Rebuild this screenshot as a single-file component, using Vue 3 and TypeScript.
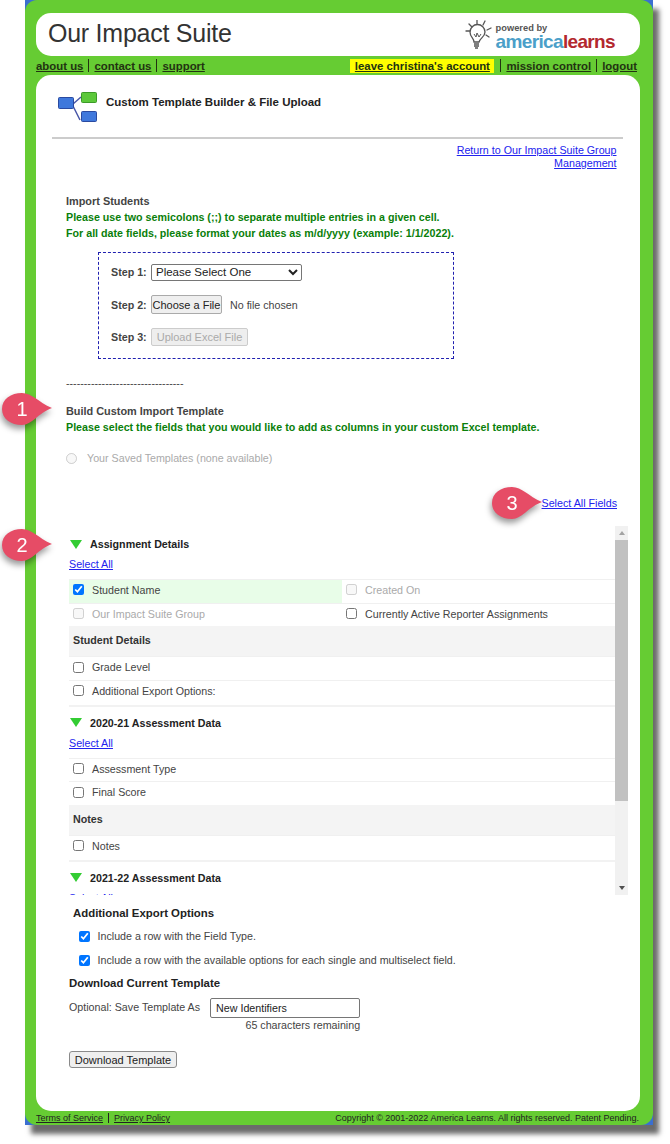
<script setup lang="ts">
interface Field {
  label: string;
  checked?: boolean;
  disabled?: boolean;
}

interface Group {
  heading?: string;
  rows: Field[][];
}

interface Section {
  title: string;
  groups: Group[];
}

const topLinks = ['about us', 'contact us', 'support'];

const sections: Section[] = [
  {
    title: 'Assignment Details',
    groups: [
      {
        rows: [
          [{ label: 'Student Name', checked: true }, { label: 'Created On', disabled: true }],
          [{ label: 'Our Impact Suite Group', disabled: true }, { label: 'Currently Active Reporter Assignments' }],
        ],
      },
      { heading: 'Student Details', rows: [[{ label: 'Grade Level' }], [{ label: 'Additional Export Options:' }]] },
    ],
  },
  {
    title: '2020-21 Assessment Data',
    groups: [
      { rows: [[{ label: 'Assessment Type' }], [{ label: 'Final Score' }]] },
      { heading: 'Notes', rows: [[{ label: 'Notes' }]] },
    ],
  },
  { title: '2021-22 Assessment Data', groups: [] },
];

const exportOptions = [
  'Include a row with the Field Type.',
  'Include a row with the available options for each single and multiselect field.',
];

const callouts = [
  { n: 1, cls: 'one' },
  { n: 2, cls: 'two' },
  { n: 3, cls: 'three' },
];
</script>

<template>
  <div class="page">
    <div class="frame">
      <div class="shell">
        <header class="banner">
          <span class="suite-name">Our Impact Suite</span>
          <div class="logo">
            <svg class="bulb" width="27" height="29" viewBox="0 0 27 29" fill="none" stroke="#555" stroke-width="1.3">
              <path d="M1 11h4M4 4l3 3M12 0v4M20 1l-2 4M26 8l-4 2M24 17l-3-2" stroke-linecap="round" />
              <path d="M9 22c0-4-4-5-4-10a7.500 7.500 0 0 1 15 0c0 5-5 6-6 10z" />
              <path d="M9 14l2 3 1-4 2 4 2-3" stroke-width="1" />
              <path d="M9 24h5M9 26h5M10 28h3" stroke-width="1.700" />
            </svg>
            <div class="logo-text">
              <span class="powered">powered by</span>
              <span class="brand"><b class="america">america</b><b class="learns">learns</b></span>
            </div>
          </div>
        </header>

        <nav class="top-nav">
          <div class="nav-side">
            <template v-for="(link, i) in topLinks" :key="link">
              <span v-if="i" class="pipe"></span>
              <a class="nav-link">{{ link }}</a>
            </template>
          </div>
          <div class="nav-side">
            <span class="highlight"><a class="nav-link">leave christina's account</a></span>
            <span class="pipe"></span>
            <a class="nav-link">mission control</a>
            <span class="pipe"></span>
            <a class="nav-link">logout</a>
          </div>
        </nav>

        <main class="panel">
          <div class="page-title">
            <svg width="39" height="31" viewBox="0 0 39 31" fill="none">
              <path d="M15 12l8-7M15 14l7 14" stroke="#4a58a8" stroke-width="1.500" />
              <rect x="0.500" y="5.500" width="15" height="11" rx="1" fill="#3f78dc" stroke="#2a4aa0" />
              <rect x="23.500" y="0.500" width="15" height="10" rx="1" fill="#5cc83a" stroke="#3c9a28" />
              <rect x="23.500" y="19.500" width="15" height="10" rx="1" fill="#3f78dc" stroke="#2a4aa0" />
            </svg>
            <h1>Custom Template Builder &amp; File Upload</h1>
          </div>
          <hr class="rule" />
          <div class="return-row"><a class="link">Return to Our Impact Suite Group Management</a></div>

          <section class="import">
            <h2>Import Students</h2>
            <p class="note">Please use two semicolons (;;) to separate multiple entries in a given cell.</p>
            <p class="note">For all date fields, please format your dates as m/d/yyyy (example: 1/1/2022).</p>
            <div class="steps">
              <div class="step">
                <label>Step 1:</label>
                <select class="step-select"><option>Please Select One</option></select>
              </div>
              <div class="step">
                <label>Step 2:</label>
                <button class="file-btn" type="button">Choose a File</button>
                <span class="no-file">No file chosen</span>
              </div>
              <div class="step">
                <label>Step 3:</label>
                <button class="upload-btn" type="button" disabled>Upload Excel File</button>
              </div>
            </div>
            <div class="dashes">---------------------------------</div>
          </section>

          <section class="build">
            <h2>Build Custom Import Template</h2>
            <p class="note">Please select the fields that you would like to add as columns in your custom Excel template.</p>
            <label class="saved"><input type="radio" disabled /><span>Your Saved Templates (none available)</span></label>
          </section>

          <div class="select-fields"><a class="link">Select All Fields</a></div>

          <div class="picker">
            <div class="picker-list">
              <div v-for="section in sections" :key="section.title" class="picker-section">
                <div class="section-head">
                  <span class="arrow"></span>
                  <strong>{{ section.title }}</strong>
                </div>
                <a class="link select-all">Select All</a>
                <div v-for="(group, g) in section.groups" :key="g">
                  <div v-if="group.heading" class="group-head">{{ group.heading }}</div>
                  <div v-for="(row, r) in group.rows" :key="r" class="field-row">
                    <label
                      v-for="field in row"
                      :key="field.label"
                      class="field"
                      :class="{ picked: field.checked, off: field.disabled }"
                    >
                      <input type="checkbox" :checked="field.checked" :disabled="field.disabled" />
                      <span>{{ field.label }}</span>
                    </label>
                  </div>
                </div>
              </div>
            </div>
            <div class="scrollbar">
              <span class="scroll-btn up"></span>
              <span class="thumb"></span>
              <span class="scroll-rest"></span>
              <span class="scroll-btn down"></span>
            </div>
          </div>

          <section class="export">
            <h3>Additional Export Options</h3>
            <label v-for="option in exportOptions" :key="option" class="export-option">
              <input type="checkbox" checked />
              <span>{{ option }}</span>
            </label>
          </section>

          <section class="download">
            <h3>Download Current Template</h3>
            <div class="save-row">
              <span class="save-label">Optional: Save Template As</span>
              <div class="save-field">
                <input class="save-input" type="text" value="New Identifiers" />
                <span class="remaining">65 characters remaining</span>
              </div>
            </div>
            <button class="download-btn" type="button">Download Template</button>
          </section>
        </main>

        <footer class="foot">
          <div class="foot-links">
            <a>Terms of Service</a>
            <span class="foot-pipe"></span>
            <a>Privacy Policy</a>
          </div>
          <span>Copyright © 2001-2022 America Learns. All rights reserved. Patent Pending.</span>
        </footer>
      </div>

      <div v-for="c in callouts" :key="c.n" class="callout" :class="c.cls">
        <svg width="52" height="34" viewBox="0 0 52 34">
          <path d="M21 1C31 1 37 10 51 16C37 21 31 33 21 33C10 33 1 27 1 17S10 1 21 1z" fill="#e64c66" />
        </svg>
        <span>{{ c.n }}</span>
      </div>
    </div>
  </div>
</template>

<style scoped>
.page {
  height: 1144px;
}

.frame {
  position: relative;
  width: 628px;
  height: 1125px;
  margin-left: 25px;
  background: #3b6fd0;
  box-shadow: 6px 9px 5px #6b6b6b;
  font-family: 'Liberation Sans', Arial, sans-serif;
  font-size: 10.700px;
  color: #444;
}

.shell {
  display: flex;
  flex-direction: column;
  height: 100%;
  padding: 13px 13px 0 11px;
  box-sizing: border-box;
  background: #66cc33;
  border-radius: 12px;
}

.banner {
  display: flex;
  justify-content: space-between;
  height: 43px;
  padding: 0 25px 0 12px;
  background: #fff;
  border-radius: 15px;
}

.suite-name {
  font-size: 25px;
  line-height: 41px;
  letter-spacing: -0.25px;
  color: #333;
}

.logo {
  display: flex;
  gap: 4px;
  padding-top: 7px;
}

.logo-text {
  display: flex;
  flex-direction: column;
}

.powered {
  font-size: 9.300px;
  font-weight: bold;
  line-height: 10px;
  margin-top: 3px;
  color: #555;
}

.brand {
  font-size: 19px;
  line-height: 18px;
  letter-spacing: -0.65px;
}

.america {
  color: #4b9fc9;
}

.learns {
  color: #b3282e;
}

.top-nav {
  display: flex;
  justify-content: space-between;
  height: 19px;
  padding-right: 3px;
  align-items: center;
}

.nav-side {
  display: flex;
  align-items: center;
}

.nav-link {
  font-size: 11.400px;
  font-weight: bold;
  color: #223311;
  text-decoration: underline;
}

.pipe {
  width: 1px;
  height: 13px;
  margin: 0 5px;
  background: #223311;
}

.highlight {
  display: flex;
  align-items: center;
  height: 14px;
  margin-right: 1px;
  padding: 0 4.500px;
  background: #ffff00;
}

.panel {
  flex: 1;
  padding: 17px 0 0;
  background: #fff;
  border-radius: 15px;
}

.page-title {
  display: flex;
  gap: 9px;
  padding-left: 22px;
  height: 32px;
}

.page-title h1 {
  margin: 3px 0 0;
  font-size: 11.500px;
  line-height: 14px;
  color: #222;
}

.rule {
  height: 2px;
  margin: 13px 17px 0 16px;
  border: 0;
  background: #ccc;
}

.link {
  color: #2222ee;
  text-decoration: underline;
}

.return-row {
  width: 165px;
  margin: 5px 0 0 415.500px;
  line-height: 13px;
  text-align: right;
}

.import,
.build {
  padding-left: 30px;
}

.import {
  margin-top: 23px;
}

h2 {
  margin: 0;
  font-size: 10.900px;
  line-height: 16px;
  color: #444;
}

.note {
  margin: 0;
  font-size: 10.700px;
  font-weight: bold;
  line-height: 16px;
  color: #0a800a;
}

.steps {
  box-sizing: border-box;
  width: 356px;
  height: 107px;
  margin: 11px 0 0 32px;
  padding: 9px 12px;
  border: 1px dashed #2020b0;
}

.step {
  display: flex;
  align-items: center;
  gap: 5px;
  height: 20px;
  margin-bottom: 12.500px;
}

.step label {
  width: 35px;
  font-weight: bold;
  white-space: nowrap;
}

.step-select {
  width: 151px;
  height: 17px;
  padding: 0;
  font-family: inherit;
  font-size: 11.500px;
  color: #222;
  background: #fff;
  border: 1px solid #767676;
  border-radius: 2px;
}

.file-btn,
.upload-btn {
  padding: 0;
  font-family: inherit;
  font-size: 11px;
  border: 1px solid #aaa;
  border-radius: 2px;
  white-space: nowrap;
}

.file-btn {
  width: 71px;
  height: 19px;
  color: #222;
  background: #efefef;
}

.upload-btn {
  width: 97px;
  height: 18px;
  color: #aaa;
  background: #eee;
  border-color: #ccc;
}

.no-file {
  margin-left: 3px;
}

.dashes {
  margin-top: 17px;
  line-height: 14px;
  color: #444;
}

.build {
  margin-top: 13px;
}

.saved {
  display: flex;
  align-items: center;
  gap: 10px;
  margin-top: 17px;
  color: #aaa;
}

.saved input {
  width: 11px;
  height: 11px;
  margin: 0;
}

.select-fields {
  margin: 32px 23px 0 0;
  line-height: 14px;
  text-align: right;
}

.picker {
  display: flex;
  width: 559px;
  height: 369px;
  margin: 16px 0 0 33px;
  overflow: hidden;
}

.picker-list {
  flex: 1;
  min-width: 0;
  padding-top: 2px;
  overflow: hidden;
}

.picker-section {
  padding-bottom: 1px;
  border-bottom: 2px solid #f2f2f2;
}

.picker-section:last-child {
  border-bottom: 0;
}

.section-head {
  display: flex;
  align-items: center;
  gap: 8px;
  height: 18px;
  margin-top: 7px;
  padding-left: 1px;
}

.section-head strong {
  color: #222;
}

.arrow {
  width: 0;
  height: 0;
  border-left: 6px solid transparent;
  border-right: 6px solid transparent;
  border-top: 9px solid #33cc33;
}

.select-all {
  display: block;
  margin: 4px 0 8px;
  line-height: 14px;
}

.group-head {
  height: 30px;
  padding-left: 4px;
  font-weight: bold;
  line-height: 29px;
  color: #333;
  background: #f4f4f4;
}

.field-row {
  display: flex;
  height: 22.700px;
  border-top: 1px solid #f0f0f0;
}

.field {
  display: flex;
  align-items: center;
  gap: 8px;
  box-sizing: border-box;
  width: 274px;
  padding: 0 0 3px 4px;
  color: #444;
}

.field.picked {
  background: #e8fde8;
}

.field.off {
  color: #aaa;
}

.field input {
  width: 11px;
  height: 11px;
  margin: 0;
}

.scrollbar {
  display: flex;
  flex-direction: column;
  width: 13px;
  background: #f1f1f1;
}

.scroll-btn {
  position: relative;
  height: 14px;
}

.scroll-btn::after {
  content: '';
  position: absolute;
  left: 4px;
  top: 5px;
  border-left: 3px solid transparent;
  border-right: 3px solid transparent;
}

.scroll-btn.up::after {
  border-bottom: 4px solid #a3a3a3;
}

.scroll-btn.down::after {
  border-top: 4px solid #505050;
}

.thumb {
  height: 261px;
  background: #c1c1c1;
}

.scroll-rest {
  flex: 1;
}

h3 {
  margin: 0;
  font-size: 11.400px;
  line-height: 14px;
  color: #222;
}

.export {
  margin: 11px 0 0 37px;
}

.export-option {
  display: flex;
  align-items: center;
  gap: 7.500px;
  height: 24px;
  padding-left: 6px;
}

.export-option:first-of-type {
  margin-top: 4px;
}

.export-option input {
  width: 11px;
  height: 11px;
  margin: 0;
}

.download {
  margin: 4px 0 0 33px;
}

.save-row {
  display: flex;
  gap: 10px;
  margin-top: 8px;
}

.save-label {
  line-height: 18px;
}

.save-field {
  display: flex;
  flex-direction: column;
  align-items: flex-end;
  width: 150px;
}

.save-input {
  box-sizing: border-box;
  width: 150px;
  height: 20px;
  padding: 0 5px;
  font-family: inherit;
  font-size: 10.700px;
  color: #222;
  border: 1px solid #767676;
  border-radius: 2px;
}

.remaining {
  line-height: 14px;
}

.download-btn {
  width: 108px;
  height: 17px;
  margin-top: 19px;
  padding: 0;
  font-family: inherit;
  font-size: 11px;
  color: #222;
  background: #efefef;
  border: 1px solid #8a8a8a;
  border-radius: 3px;
}

.foot {
  display: flex;
  justify-content: space-between;
  align-items: center;
  height: 14px;
  padding-right: 1px;
  font-size: 9px;
  color: #222;
}

.foot-links {
  display: flex;
  align-items: center;
}

.foot-links a {
  text-decoration: underline;
}

.foot-pipe {
  width: 1px;
  height: 10px;
  margin: 0 5px;
  background: #222;
}

.callout {
  position: absolute;
  width: 52px;
  height: 34px;
  filter: drop-shadow(-1px 4px 3px rgba(0, 0, 0, 0.4));
}

.callout svg {
  display: block;
}

.callout span {
  position: absolute;
  left: 1px;
  top: 0;
  width: 40px;
  font-size: 20px;
  line-height: 34px;
  text-align: center;
  color: #fff;
}

.one {
  left: -24px;
  top: 392px;
}

.two {
  left: -24px;
  top: 528px;
}

.three {
  left: 466px;
  top: 486px;
}
</style>

<style>
html,
body {
  margin: 0;
  background: #fff;
}
</style>
